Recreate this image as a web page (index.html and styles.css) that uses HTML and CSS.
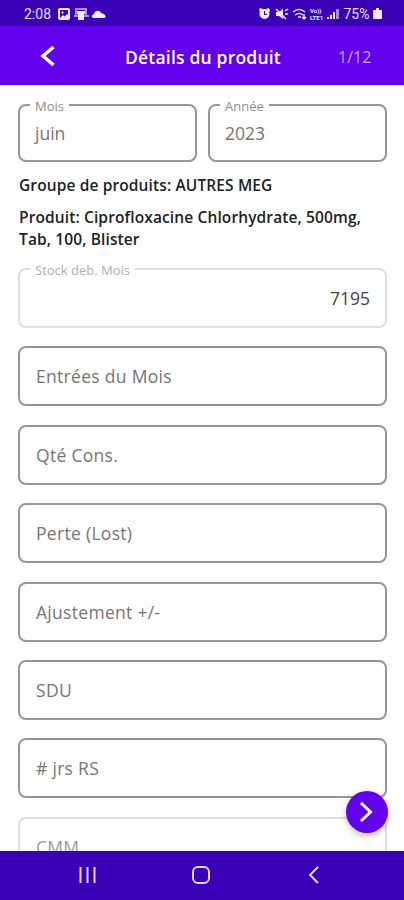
FILE: index.html
```
<!DOCTYPE html>
<html lang="fr">
<head>
  <meta charset="utf-8">
  <meta name="viewport" content="width=device-width, initial-scale=1">
  <title>Détails du produit</title>
  <link rel="stylesheet" href="styles.css">
</head>
<body>
  <div class="status-bar">
    <span class="time">2:08</span>
    <svg class="status-left" width="50" height="14" viewBox="0 0 50 14">
      <path fill-rule="evenodd" d="M2 1h8a2 2 0 0 1 2 2v8a2 2 0 0 1-2 2H2a2 2 0 0 1-2-2V3a2 2 0 0 1 2-2zM2 3v8h8V3z"/>
      <path d="M3.500 4.500h2v2h-2zM2 11l3-3 1.500 1.500L9 7l1 1v3z"/>
      <path class="faint" fill-rule="evenodd" d="M17 1h12v7h2v2H16V8h1zM19 3v5h8V3z"/>
      <path d="M19 4h8v3h-1v6h-6V7h-1z"/>
      <path d="M36 11c-3 0-3-3 0-4 1-4 6-4 7-1 5 1 6 5 3 5z"/>
    </svg>
    <svg class="status-right" width="83" height="14" viewBox="0 0 83 14">
      <path d="M2 1l3 1-3 3-1-1zM11 1l1 3-1 1-3-3z"/>
      <path fill-rule="evenodd" d="M6.500 2a5 5 0 1 1 0 10 5 5 0 0 1 0-10zM6 4v4h3V7H7V4z"/>
      <path d="M18 5h3l4-3v10l-4-3h-3z"/>
      <path class="line" d="M18 2l10 10M27 4l3-2M27 7h3"/>
      <path class="line" d="M35 5q6-5 12 0M37 8q4-3 8 0M40 10h3M46 7v5m-2-2l2 2 2-2"/>
      <text class="volte" x="52" y="6">Vo))</text>
      <text class="volte" x="52" y="13">LTE1</text>
      <path d="M69 10h2v2h-2zM72 8h2v4h-2zM75 5h2v7h-2z"/>
      <path class="faint" d="M78 2h3v10h-3z"/>
    </svg>
    <span class="percent">75%</span>
    <svg class="battery" width="9" height="12" viewBox="0 0 9 12">
      <path d="M3 0h3v2h2q1 0 1 1v7q0 1-1 1H1q-1 0-1-1V3q0-1 1-1h2z"/>
    </svg>
  </div>

  <header class="app-bar">
    <svg class="back" width="16" height="22" viewBox="0 0 16 22">
      <path d="M13.500 2L3 11l10.500 9"/>
    </svg>
    <h1>Détails du produit</h1>
    <span class="counter">1/12</span>
  </header>

  <main class="content">
    <div class="row">
      <div class="field short">
        <label>Mois</label>
        <span class="value">juin</span>
      </div>
      <div class="field short">
        <label>Année</label>
        <span class="value">2023</span>
      </div>
    </div>

    <p class="group">Groupe de produits: AUTRES MEG</p>
    <p class="product">Produit: Ciprofloxacine Chlorhydrate, 500mg, Tab, 100, Blister</p>

    <div class="fields">
      <div class="field disabled stock">
        <label>Stock deb. Mois</label>
        <span class="value">7195</span>
      </div>
      <div class="field"><span class="hint">Entrées du Mois</span></div>
      <div class="field"><span class="hint">Qté Cons.</span></div>
      <div class="field"><span class="hint">Perte (Lost)</span></div>
      <div class="field"><span class="hint">Ajustement +/-</span></div>
      <div class="field"><span class="hint">SDU</span></div>
      <div class="field"><span class="hint"># jrs RS</span></div>
      <div class="field disabled"><span class="hint">CMM</span></div>
    </div>

    <button class="next" aria-label="Suivant">
      <svg width="16" height="22" viewBox="0 0 16 22">
        <path d="M2 2L11.500 11 2 20"/>
      </svg>
    </button>
  </main>

  <nav class="nav-bar">
    <svg width="20" height="18" viewBox="0 0 20 18">
      <path d="M2.500 1v16M9.500 1v16M16.500 1v16"/>
    </svg>
    <svg width="20" height="18" viewBox="0 0 20 18">
      <rect x="2" y="1" width="16" height="16" rx="5"/>
    </svg>
    <svg width="20" height="18" viewBox="0 0 20 18">
      <path d="M14 1L6 9l8 8"/>
    </svg>
  </nav>
</body>
</html>
```
FILE: styles.css
```
* {
  box-sizing: border-box;
}

body {
  margin: 0;
  height: 900px;
  display: flex;
  flex-direction: column;
  overflow: hidden;
  font-family: "Open Sans", "Noto Sans", sans-serif;
  background: #fff;
}

/* status bar */
.status-bar {
  height: 26px;
  flex: none;
  display: flex;
  align-items: center;
  padding: 1px 22px 0 24px;
  background: #3a00b5;
  color: #e8e0ff;
  fill: #f0eaff;
}
.time,
.percent {
  font-family: Roboto, sans-serif;
  font-size: 14px;
}
.status-left {
  margin-left: 7px;
}
.status-right {
  margin-left: auto;
  margin-right: 3px;
}
.percent {
  width: 29.5px;
}
.line {
  fill: none;
  stroke: #e8e0ff;
  stroke-width: 1.5;
}
.volte {
  font: bold 6px Roboto, sans-serif;
}
.faint {
  opacity: 0.6;
}

/* title bar */
.app-bar {
  height: 59px;
  flex: none;
  display: grid;
  grid-template-columns: 86px 1fr 84px;
  align-items: center;
  background: #6200ee;
  color: #fff;
}
.back {
  margin-left: 40px;
  fill: none;
  stroke: #fff;
  stroke-width: 3.5;
}
.app-bar h1 {
  margin: 0;
  padding-top: 2px;
  text-align: center;
  font-size: 17.5px;
  font-weight: 600;
  letter-spacing: 0.2px;
  white-space: nowrap;
}
.counter {
  padding: 2px 0 0 18px;
  font-size: 16px;
  color: #c9a8fa;
}

/* form */
.content {
  position: relative;
  height: 766px;
  flex: none;
  overflow: hidden;
  padding: 19px 17px 0 18px;
}
.row {
  display: flex;
  gap: 11px;
}
.row .field {
  flex: 1;
}
.fields {
  display: flex;
  flex-direction: column;
  gap: 18.4px;
}
.field {
  position: relative;
  height: 60px;
  flex: none;
  display: flex;
  align-items: center;
  padding: 0 15px;
  border: 2px solid #969696;
  border-radius: 8px;
  font-size: 17.5px;
  color: #757575;
}
.hint {
  letter-spacing: 0.3px;
  padding-left: 1px;
}
.field.short {
  height: 58px;
}
.field label {
  position: absolute;
  top: -8px;
  left: 10px;
  padding: 0 5px;
  background: #fff;
  font-size: 13px;
  line-height: 16px;
  color: #8c8c8c;
}
.field.disabled {
  border-color: #dedede;
  color: #9c9c9c;
}
.field.disabled label {
  color: #b0b0b0;
}
.stock {
  justify-content: flex-end;
}
.stock .value {
  color: #444;
}
.group,
.product {
  margin: 0;
  padding-left: 1px;
  font-size: 15.5px;
  font-weight: 600;
  line-height: 22px;
  letter-spacing: 0.12px;
  color: #222;
}
.group {
  margin-top: 12px;
}
.product {
  margin-top: 10px;
  margin-bottom: 18px;
}

/* floating button */
.next {
  position: absolute;
  right: 16px;
  bottom: 18px;
  width: 42px;
  height: 42px;
  padding: 0;
  display: flex;
  align-items: center;
  justify-content: center;
  border: 0;
  border-radius: 50%;
  background: #6200ee;
  box-shadow: 0 3px 6px rgba(0, 0, 0, 0.25);
}
.next svg {
  fill: none;
  stroke: #fff;
  stroke-width: 3;
}

/* bottom navigation */
.nav-bar {
  height: 49px;
  flex: none;
  display: flex;
  justify-content: space-between;
  align-items: center;
  padding: 0 80px 1px 78px;
  background: #3a00b5;
}
.nav-bar svg {
  fill: none;
  stroke: #e0d6fa;
  stroke-width: 2;
}
```
